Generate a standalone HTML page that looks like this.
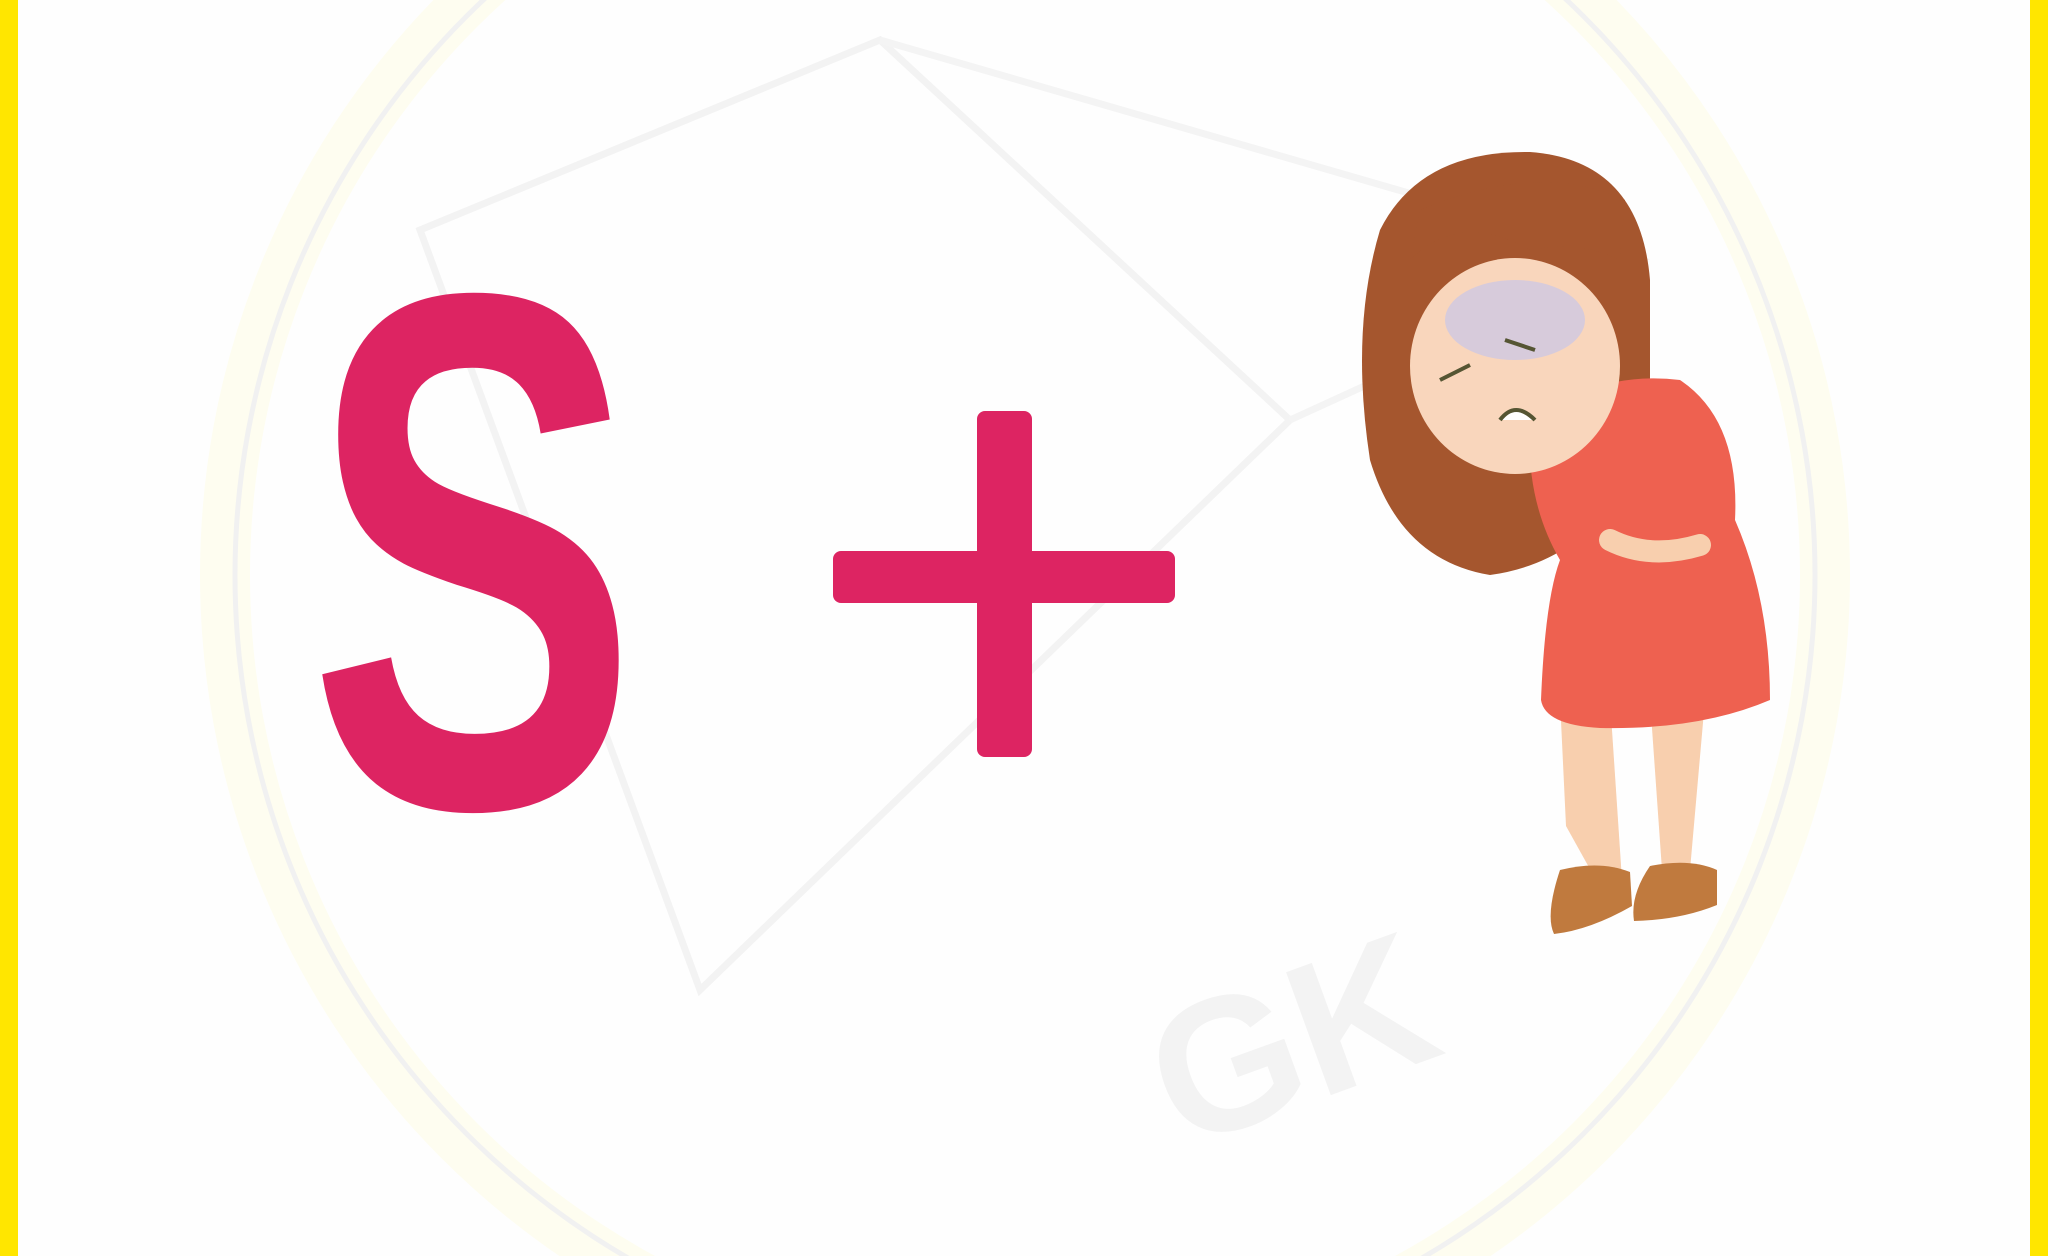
<!DOCTYPE html>
<html><head><meta charset="utf-8"><style>
html,body{margin:0;padding:0;width:2048px;height:1256px;overflow:hidden;background:#fff}
svg{display:block;position:absolute;left:0;top:0}
</style></head><body>
<svg width="2048" height="1256" viewBox="0 0 2048 1256" xmlns="http://www.w3.org/2000/svg" overflow="hidden">
<rect width="2048" height="1256" fill="#fefefe"/>
<circle cx="1025" cy="575" r="800" fill="none" stroke="#fefdf0" stroke-width="50"/>
<circle cx="1025" cy="575" r="790" fill="none" stroke="#f1f1f1" stroke-width="5"/>
<path d="M420 230 L880 40 L1290 420 L700 990 Z" fill="none" stroke="#f3f3f3" stroke-width="7"/>
<path d="M880 40 L1640 260 L1290 420" fill="none" stroke="#f4f4f4" stroke-width="7"/>
<text x="1150" y="1120" font-family="Liberation Sans, sans-serif" font-weight="bold" font-size="190" fill="#f3f3f3" transform="rotate(-20 1250 1050)">GK</text>
<rect x="0" y="0" width="18" height="1256" fill="#ffe600"/>
<rect x="2030" y="0" width="18" height="1256" fill="#ffe600"/>
<text x="308" y="806" font-family="Liberation Sans, sans-serif" font-weight="bold" font-size="735" fill="#dd2462" textLength="330" lengthAdjust="spacingAndGlyphs">S</text>
<rect x="833" y="551" width="342" height="52" rx="8" fill="#dd2462"/>
<rect x="977" y="411" width="55" height="346" rx="8" fill="#dd2462"/>
<path d="M1380 230 Q1420 150 1530 152 Q1640 160 1650 280 L1650 440 Q1600 560 1490 575 Q1400 560 1370 460 Q1350 330 1380 230Z" fill="#a5562e"/>
<path d="M1566 826 L1596 880 L1622 880 L1610 700 L1560 700Z" fill="#f8cfae"/>
<path d="M1650 700 L1662 870 L1690 870 L1705 700Z" fill="#f8cfae"/>
<path d="M1560 870 Q1600 860 1630 872 L1632 906 Q1590 930 1554 934 Q1545 915 1560 870Z" fill="#c07a3e"/>
<path d="M1650 866 Q1690 858 1717 870 L1717 905 Q1680 920 1634 921 Q1630 895 1650 866Z" fill="#c07a3e"/>
<path d="M1530 420 Q1600 370 1680 380 Q1740 420 1735 520 Q1770 600 1770 700 Q1700 730 1600 728 Q1545 725 1541 700 Q1545 600 1560 560 Q1525 500 1530 420Z" fill="#ee6150"/>
<ellipse cx="1515" cy="366" rx="105" ry="108" fill="#f9d6bc"/>
<ellipse cx="1515" cy="320" rx="70" ry="40" fill="#c9c6e8" opacity="0.7"/>
<path d="M1410 260 Q1460 210 1530 250 Q1580 240 1620 260 L1625 200 Q1540 160 1420 210Z" fill="#a5562e"/>
<path d="M1440 380 L1470 365 M1505 340 L1535 350" stroke="#553" stroke-width="4" fill="none"/>
<path d="M1500 420 Q1515 400 1535 420" stroke="#553" stroke-width="4" fill="#fff"/>
<path d="M1610 540 Q1650 560 1700 545" stroke="#f8cfae" stroke-width="22" fill="none" stroke-linecap="round"/>
</svg>
</body></html>
